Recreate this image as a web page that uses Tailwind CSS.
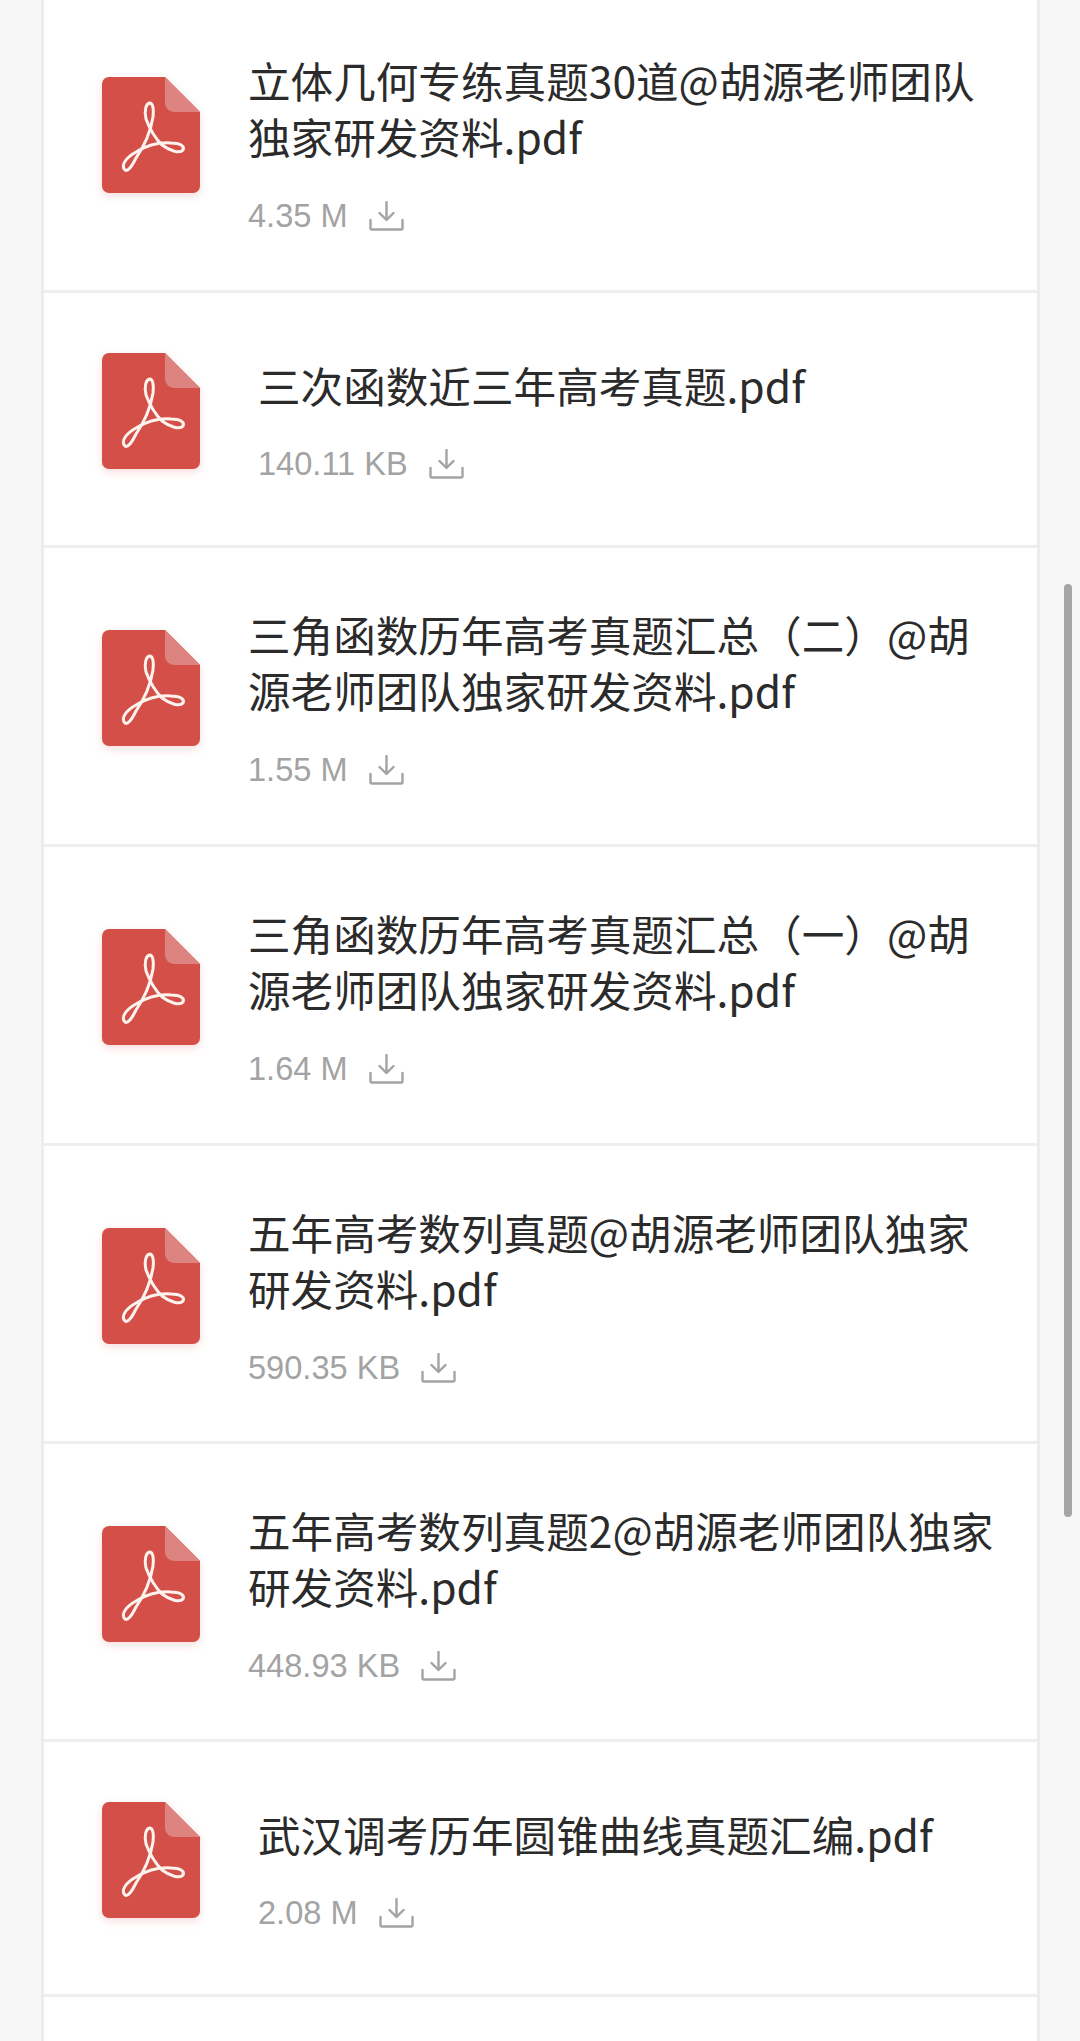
<!DOCTYPE html>
<html lang="zh">
<head>
<meta charset="utf-8">
<script src="https://cdn.jsdelivr.net/npm/@tailwindcss/browser@4"></script>
</head>
<body class="bg-[#f7f7f7]">
<svg width="0" height="0" class="absolute">
  <defs>
    <symbol id="pdf" viewBox="0 0 98 116">
      <path d="M7 0H63L98 35V109a7 7 0 0 1-7 7H7a7 7 0 0 1-7-7V7a7 7 0 0 1 7-7Z" fill="#d44f48"/>
      <path d="M63 0L98 35H72a9 9 0 0 1-9-9Z" fill="#dd8380"/>
      <path d="M23 93C18 88 25 80 34 75C44 69 56 65 69 66C78 66 83 69 81 73C78 77 68 74 60 68C52 60 47 50 44 42C42 33 44 27 47.500 26C51 26 52 32 51 40C49 52 43 68 34 81C30 89 26 95 23 93Z" fill="none" stroke="#fdf3ee" stroke-width="3" stroke-linejoin="round"/>
    </symbol>
    <symbol id="dl" viewBox="0 0 35 30">
      <path d="M17.500 1V18.500M10.500 12L17.500 19L24.500 12M1.500 19V27A1.500 1.500 0 0 0 3 28.500H32A1.500 1.500 0 0 0 33.500 27V19" fill="none" stroke="#a3a3a3" stroke-width="2.400" stroke-linecap="round" stroke-linejoin="round"/>
    </symbol>
  </defs>
</svg>
<div class="relative h-[2041px] overflow-hidden font-['Liberation_Sans','Noto_Sans_CJK_SC',sans-serif]">
  <div class="ml-[41px] mt-[-6px] w-[999px] h-[2100px] bg-white border-x-[3px] border-[#ededed]">

    <div class="h-[299px] flex items-start pl-[58px] pt-[83px] border-b-[3px] border-[#eeeeee]">
      <svg class="w-[98px] h-[116px] shrink-0 drop-shadow-[0_3px_4px_rgba(214,80,74,0.2)]"><use href="#pdf"/></svg>
      <div class="ml-[48px] mt-[-25px]">
        <p class="font-['Noto_Sans_CJK_SC',sans-serif] text-[42.6px] leading-[56px] text-[#2b2b2b] whitespace-nowrap">立体几何专练真题30道@胡源老师团队<br>独家研发资料.pdf</p>
        <div class="mt-[32px] flex items-center h-[40px] gap-[21px] text-[32.600px] text-[#a3a3a3]"><span>4.35 M</span><svg class="w-[35px] h-[30px]"><use href="#dl"/></svg></div>
      </div>
    </div>

    <div class="h-[255px] flex items-start pl-[58px] pt-[60px] border-b-[3px] border-[#eeeeee]">
      <svg class="w-[98px] h-[116px] shrink-0 drop-shadow-[0_3px_4px_rgba(214,80,74,0.2)]"><use href="#pdf"/></svg>
      <div class="ml-[58px] mt-[4px]">
        <p class="font-['Noto_Sans_CJK_SC',sans-serif] text-[42.6px] leading-[56px] text-[#2b2b2b] whitespace-nowrap">三次函数近三年高考真题.pdf</p>
        <div class="mt-[31px] flex items-center h-[40px] gap-[21px] text-[32.600px] text-[#a3a3a3]"><span>140.11 KB</span><svg class="w-[35px] h-[30px]"><use href="#dl"/></svg></div>
      </div>
    </div>

    <div class="h-[299px] flex items-start pl-[58px] pt-[82px] border-b-[3px] border-[#eeeeee]">
      <svg class="w-[98px] h-[116px] shrink-0 drop-shadow-[0_3px_4px_rgba(214,80,74,0.2)]"><use href="#pdf"/></svg>
      <div class="ml-[48px] mt-[-24px]">
        <p class="font-['Noto_Sans_CJK_SC',sans-serif] text-[42.6px] leading-[56px] text-[#2b2b2b] whitespace-nowrap">三角函数历年高考真题汇总（二）@胡<br>源老师团队独家研发资料.pdf</p>
        <div class="mt-[32px] flex items-center h-[40px] gap-[21px] text-[32.600px] text-[#a3a3a3]"><span>1.55 M</span><svg class="w-[35px] h-[30px]"><use href="#dl"/></svg></div>
      </div>
    </div>

    <div class="h-[299px] flex items-start pl-[58px] pt-[82px] border-b-[3px] border-[#eeeeee]">
      <svg class="w-[98px] h-[116px] shrink-0 drop-shadow-[0_3px_4px_rgba(214,80,74,0.2)]"><use href="#pdf"/></svg>
      <div class="ml-[48px] mt-[-24px]">
        <p class="font-['Noto_Sans_CJK_SC',sans-serif] text-[42.6px] leading-[56px] text-[#2b2b2b] whitespace-nowrap">三角函数历年高考真题汇总（一）@胡<br>源老师团队独家研发资料.pdf</p>
        <div class="mt-[32px] flex items-center h-[40px] gap-[21px] text-[32.600px] text-[#a3a3a3]"><span>1.64 M</span><svg class="w-[35px] h-[30px]"><use href="#dl"/></svg></div>
      </div>
    </div>

    <div class="h-[298px] flex items-start pl-[58px] pt-[82px] border-b-[3px] border-[#eeeeee]">
      <svg class="w-[98px] h-[116px] shrink-0 drop-shadow-[0_3px_4px_rgba(214,80,74,0.2)]"><use href="#pdf"/></svg>
      <div class="ml-[48px] mt-[-24px]">
        <p class="font-['Noto_Sans_CJK_SC',sans-serif] text-[42.6px] leading-[56px] text-[#2b2b2b] whitespace-nowrap">五年高考数列真题@胡源老师团队独家<br>研发资料.pdf</p>
        <div class="mt-[32px] flex items-center h-[40px] gap-[21px] text-[32.600px] text-[#a3a3a3]"><span>590.35 KB</span><svg class="w-[35px] h-[30px]"><use href="#dl"/></svg></div>
      </div>
    </div>

    <div class="h-[298px] flex items-start pl-[58px] pt-[82px] border-b-[3px] border-[#eeeeee]">
      <svg class="w-[98px] h-[116px] shrink-0 drop-shadow-[0_3px_4px_rgba(214,80,74,0.2)]"><use href="#pdf"/></svg>
      <div class="ml-[48px] mt-[-24px]">
        <p class="font-['Noto_Sans_CJK_SC',sans-serif] text-[42.6px] leading-[56px] text-[#2b2b2b] whitespace-nowrap">五年高考数列真题2@胡源老师团队独家<br>研发资料.pdf</p>
        <div class="mt-[32px] flex items-center h-[40px] gap-[21px] text-[32.600px] text-[#a3a3a3]"><span>448.93 KB</span><svg class="w-[35px] h-[30px]"><use href="#dl"/></svg></div>
      </div>
    </div>

    <div class="h-[255px] flex items-start pl-[58px] pt-[60px] border-b-[3px] border-[#eeeeee]">
      <svg class="w-[98px] h-[116px] shrink-0 drop-shadow-[0_3px_4px_rgba(214,80,74,0.2)]"><use href="#pdf"/></svg>
      <div class="ml-[58px] mt-[4px]">
        <p class="font-['Noto_Sans_CJK_SC',sans-serif] text-[42.6px] leading-[56px] text-[#2b2b2b] whitespace-nowrap">武汉调考历年圆锥曲线真题汇编.pdf</p>
        <div class="mt-[31px] flex items-center h-[40px] gap-[21px] text-[32.600px] text-[#a3a3a3]"><span>2.08 M</span><svg class="w-[35px] h-[30px]"><use href="#dl"/></svg></div>
      </div>
    </div>

  </div>
  <div class="absolute left-[1064px] top-[584px] w-[8px] h-[933px] rounded-full bg-[#a5a5a5]"></div>
</div>
</body>
</html>
